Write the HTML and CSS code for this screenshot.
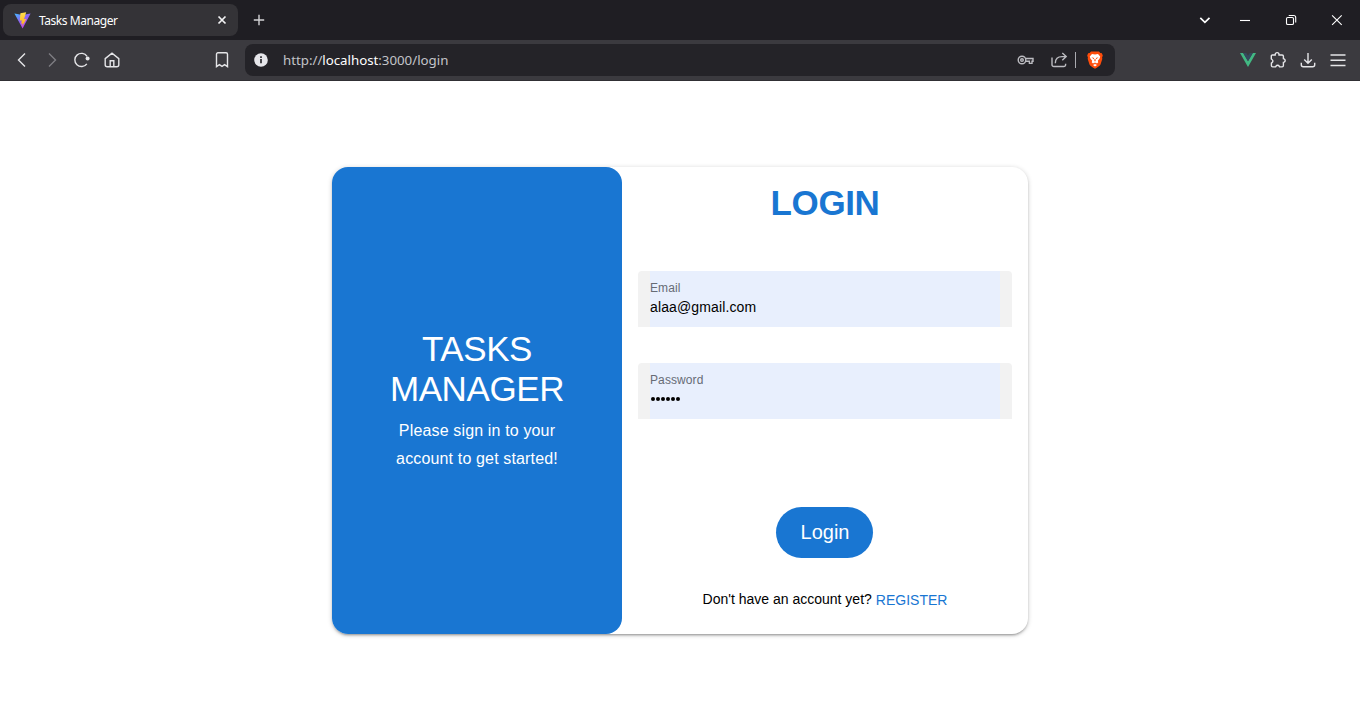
FILE: index.html
```html
<!DOCTYPE html>
<html lang="en">
<head>
<meta charset="utf-8">
<title>Tasks Manager</title>
<link rel="stylesheet" href="styles.css">
</head>
<body>
<header class="browser">
  <div class="tabs">
    <div class="tab">
      <svg class="favicon" width="17" height="17" viewBox="0 0 17 17">
        <defs>
          <linearGradient id="vite" x1="0" y1="0" x2="0.7" y2="1"><stop offset="0" stop-color="#41bdff"/><stop offset="0.5" stop-color="#8b62f5"/><stop offset="1" stop-color="#cf3be8"/></linearGradient>
          <linearGradient id="bolt" x1="0" y1="0" x2="0" y2="1"><stop offset="0" stop-color="#ffe04a"/><stop offset="1" stop-color="#ffa81c"/></linearGradient>
        </defs>
        <path fill="url(#vite)" d="M.4 1.6 8.5 3 16.6 1.6 8.6 16.6z"/>
        <path fill="url(#bolt)" d="M12.2.2 6.4 1.2 5.8 8.7l2-.4-.6 3.5 1.6-.4-.8 3.3 4.4-7.9-2.4.4z"/>
      </svg>
      <span class="tab-title">Tasks Manager</span>
      <svg class="tab-close" width="10" height="10" viewBox="0 0 10 10"><path d="M1.5 1.5l7 7M8.5 1.5l-7 7" stroke="#f2f2f4" stroke-width="1.7"/></svg>
    </div>
    <svg class="new-tab" width="12" height="12" viewBox="0 0 12 12"><path d="M6 .8v10.4M.8 6h10.4" stroke="#d3d3d6" stroke-width="1.4"/></svg>
    <div class="window-controls">
      <svg width="46" height="20" viewBox="0 0 46 20"><path d="M24.3 7.8l4.6 4.5 4.6-4.5"/></svg>
      <svg class="thin" width="46" height="20" viewBox="0 0 46 20"><path d="M18 10.5h10"/></svg>
      <svg class="thin" width="46" height="20" viewBox="0 0 46 20"><rect x="18.5" y="7.5" width="7" height="7" rx="1.3"/><path d="M20.7 5.5h5a2 2 0 0 1 2 2v5"/></svg>
      <svg class="thin" width="46" height="20" viewBox="0 0 46 20"><path d="M18.1 5.3l9.6 9.6M27.7 5.3l-9.6 9.6"/></svg>
    </div>
  </div>
  <div class="toolbar">
    <div class="nav">
      <svg width="30" height="20" viewBox="0 0 30 20"><path d="M18 3.5L11.5 10l6.5 6.5"/></svg>
      <svg class="dim" width="30" height="20" viewBox="0 0 30 20"><path d="M12 3.5l6.5 6.5-6.5 6.5"/></svg>
      <svg width="30" height="20" viewBox="0 0 30 20"><path d="M19.8 13.8a6.6 6.6 0 1 1 .2-7.4"/><circle cx="20.6" cy="8.4" r="2" fill="#e5e5e8" stroke="none"/></svg>
      <svg width="30" height="20" viewBox="0 0 30 20"><path d="M8.2 8.6 15 3.2l6.8 5.4v6.2a2 2 0 0 1-2 2h-9.6a2 2 0 0 1-2-2zM13.2 16.5v-5.7h3.6v5.7"/></svg>
    </div>
    <svg class="bookmark" width="14" height="16" viewBox="0 0 14 16"><path d="M2.9.8h8.2a1.4 1.4 0 0 1 1.4 1.4v12.4l-2.9-2L7 14.4l-2.6-1.8-2.9 2V2.2A1.4 1.4 0 0 1 2.9.8z"/></svg>
    <div class="address">
      <svg width="14" height="14" viewBox="0 0 14 14"><circle cx="7" cy="7" r="6.8" fill="#e6e6ea" stroke="none"/><path d="M7 6v4.3M7 3.2v1.7" stroke="#2a292e" stroke-width="1.7"/></svg>
      <span class="url">http://<span class="host">localhost</span>:3000/login</span>
      <svg class="key" width="17" height="12" viewBox="0 0 17 12"><circle cx="5" cy="6" r="3.8"/><circle cx="5" cy="6" r="1.3"/><path d="M9 4.5h7v2.7h-1v2.2h-2.6V7.3H9"/></svg>
      <svg class="share" width="17" height="16" viewBox="0 0 17 16"><path d="M1 5.5v7.2A1.8 1.8 0 0 0 2.8 14.5h10a1.8 1.8 0 0 0 1.8-1.8v-1M4.3 11.2C4.3 6.8 6.7 4.6 11 4.6h4M11.3 1l3.9 3.6L11.3 8.3"/></svg>
      <span class="divider"></span>
      <svg class="brave" width="16" height="18" viewBox="0 0 16 18">
        <path fill="#ff4d0b" d="M4 .5h8l1.3 1.4 1.6.3.9 2.5-.7 1.5.2 1.7-1.8 5.7c-.3 1.1-3.1 3-5.5 4.2-2.4-1.2-5.2-3.1-5.5-4.2L.7 7.9.9 6.2.2 4.7l.9-2.5 1.6-.3z"/>
        <path fill="#fff" d="M5 3.1l3 .5 3-.5 2.2 2.4-.6 2.1-1.8 2.2.5 1.5-1.3 1.1-1.5-1L8 12.5l-.5-1.1-1.5 1-1.3-1.1.5-1.5-1.8-2.2-.6-2.1zM8 12.9l2 1.1-2 1.4-2-1.4z"/>
        <path fill="#ff4d0b" d="M4.4 6.2l2.8.9-.5 1.2zM11.6 6.2l-2.8.9.5 1.2zM7.5 8h1l.2 2-.7.5-.7-.5z"/>
      </svg>
    </div>
    <div class="actions">
      <svg width="30" height="20" viewBox="0 0 30 20"><path d="M7 3h3.2L15 11.2 19.8 3H23l-8 14z" fill="#42b883" stroke="none"/><path d="M10.2 3h3L15 5.8 16.8 3h3L15 11.2z" fill="#35495e" stroke="none"/></svg>
      <svg width="30" height="20" viewBox="0 0 30 20"><path d="M9.4 5h2.8v-.5a1.9 1.9 0 0 1 3.8 0V5h3.1a1.3 1.3 0 0 1 1.3 1.3v2.4l.7.2a1.8 1.8 0 0 1 0 3.3l-.7.2v3.2a1.3 1.3 0 0 1-1.3 1.3h-2.5l-.4-.8a1.9 1.9 0 0 0-3.2 0l-.4.8H9.7a1.3 1.3 0 0 1-1.3-1.3v-2.5l.6-.4a1.9 1.9 0 0 0 0-3.2l-.7-.5V6a1 1 0 0 1 1.1-1z"/></svg>
      <svg width="30" height="20" viewBox="0 0 30 20"><path d="M15 3v10M11.2 9.5 15 13.2l3.8-3.7M8.3 12.8v1.9a2 2 0 0 0 2 2h9.4a2 2 0 0 0 2-2v-1.9"/></svg>
      <svg width="30" height="20" viewBox="0 0 30 20"><path d="M7.5 5h15M7.5 10.3h15M7.5 15.5h15"/></svg>
    </div>
  </div>
</header>
<main class="page">
  <section class="card">
    <div class="intro">
      <div class="headline">TASKS MANAGER</div>
      <div class="subtitle">Please sign in to your<br>account to get started!</div>
    </div>
    <form class="form">
      <h1 class="form-title">LOGIN</h1>
      <label class="field"><span class="control"><span class="label">Email</span><span class="value">alaa@gmail.com</span></span></label>
      <label class="field"><span class="control"><span class="label">Password</span><span class="value dots"><i></i><i></i><i></i><i></i><i></i><i></i></span></span></label>
      <button class="submit" type="button">Login</button>
      <div class="signup"><span>Don't have an account yet?</span><a class="register">REGISTER</a></div>
    </form>
  </section>
</main>
</body>
</html>
```
FILE: styles.css
```css
* { box-sizing: border-box; }
body { margin: 0; height: 720px; overflow: hidden; background: #fff; font-family: "Liberation Sans", Arial, sans-serif; font-size: 14px; color: #000; }
svg { display: block; flex: none; fill: none; stroke: #e5e5e8; stroke-width: 1.4; }
.favicon { stroke: none; }

.browser { font-family: "Noto Sans", sans-serif; }
.tabs { height: 40px; display: flex; align-items: center; background: #1f1e23; padding-left: 3px; }
.tab { width: 235px; height: 32px; display: flex; align-items: center; padding: 0 11px; border-radius: 8px; background: #343337; }
.tab-title { margin-left: 8px; flex: 1; font-size: 12px; letter-spacing: -0.45px; color: #fff; }
.new-tab { margin-left: 15px; }
.window-controls { display: flex; margin-left: auto; }
.window-controls svg { stroke: #fff; stroke-width: 1.7; }
.window-controls .thin { stroke-width: 1.1; }
.toolbar { height: 41px; display: flex; align-items: center; background: #3b3a3f; border-bottom: 1px solid #302f34; padding: 0 7px; }
.nav { display: flex; }
.dim { stroke: #7e7d82; }
.bookmark { margin-left: 88px; }
.address { width: 870px; height: 32px; margin-left: 16px; padding: 0 12px 0 9px; display: flex; align-items: center; border-radius: 8px; background: #242328; }
.address svg { stroke: #bcbcc1; }
.url { flex: 1; margin-left: 15px; font-size: 13.3px; letter-spacing: -.02px; color: #c3c3c8; }
.host { color: #fff; }
.share { margin-left: 17px; }
.divider { width: 1px; height: 16px; margin: 0 11px 0 7px; background: #aaaab0; }
.address .brave { stroke: none; }
.actions { display: flex; margin-left: auto; }

.page { height: 639px; padding-top: 86px; display: flex; justify-content: center; align-items: flex-start; }
.card { width: 696px; height: 466.5px; display: flex; border-radius: 16px; background: #fff; box-shadow: 0 1px 5px rgba(0,0,0,.2), 0 2px 2px rgba(0,0,0,.14), 0 3px 1px -2px rgba(0,0,0,.12); }
.intro { width: 290px; padding: 2px 48px 0; display: flex; flex-direction: column; justify-content: center; text-align: center; color: #fff; background: #1976d2; border-radius: 16px; }
.headline { font-size: 35px; line-height: 40px; letter-spacing: -.4px; }
.subtitle { margin-top: 8px; font-size: 16px; line-height: 28px; letter-spacing: .00937em; white-space: nowrap; }
.form { flex: 1; padding: 16px; display: flex; flex-direction: column; align-items: center; }
.form-title { margin: 0 0 48px; font-size: 35px; line-height: 40px; letter-spacing: -.4px; color: #1976d2; }
.field { width: 374px; height: 56px; margin-bottom: 36px; padding: 0 12px; background: #f2f2f2; border-radius: 4px 4px 0 0; }
.control { height: 56px; padding-top: 9px; display: flex; flex-direction: column; background: #e8effd; }
.label { font-size: 12px; line-height: 16px; letter-spacing: .1px; color: #666b75; }
.value { font-size: 14px; line-height: 22px; letter-spacing: .00937em; }
.dots { display: flex; align-items: center; gap: 1.1px; height: 22px; padding: 0 0 0 .5px; }
.dots i { width: 4px; height: 4px; border-radius: 50%; background: #000; }
.submit { width: 97px; height: 51px; margin: 52px 1px 0 0; padding: 0 0 0 1px; border: 0; border-radius: 28px; background: #1976d2; color: #fff; font: 20px "Liberation Sans", Arial, sans-serif; }
.signup { margin-top: 29px; display: flex; gap: 4px; line-height: 24px; }
.register { padding-top: 1px; color: #1976d2; }
```
